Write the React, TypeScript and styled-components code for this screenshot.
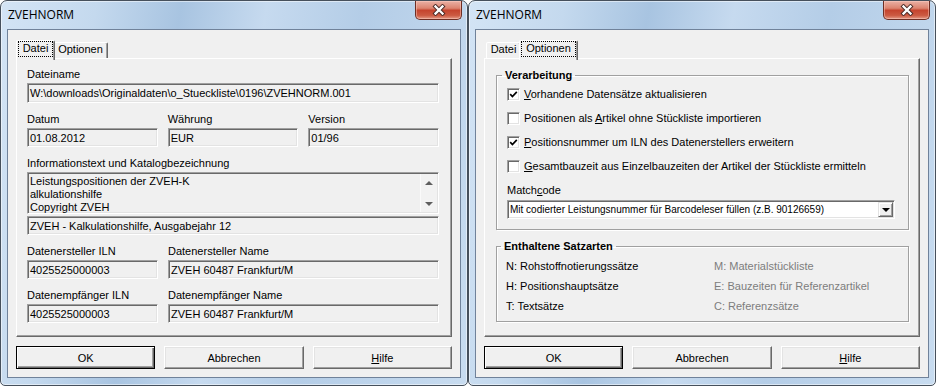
import React from 'react'
import styled, { createGlobalStyle, css } from 'styled-components'

const GlobalStyle = createGlobalStyle`
  *, *::before, *::after {
    box-sizing: border-box;
  }
  html, body {
    margin: 0;
    padding: 0;
    background: #ffffff;
  }
  body {
    font-family: 'Liberation Sans', Arial, sans-serif;
    font-size: 11px;
    color: #000;
  }
`

const sunken = css`
  border: 1px solid;
  border-color: #a0a0a0 #ffffff #ffffff #a0a0a0;
  box-shadow: inset 1px 1px 0 #696969, inset -1px -1px 0 #e3e3e3;
`

const raised = css`
  border: 1px solid;
  border-color: #e3e3e3 #696969 #696969 #e3e3e3;
  box-shadow: inset 1px 1px 0 #ffffff, inset -1px -1px 0 #a0a0a0;
  background: #f0f0f0;
`

const Desktop = styled.div`
  display: flex;
  width: 936px;
  height: 386px;
  overflow: hidden;
`

const WindowUI = styled.div`
  flex: 1;
  display: flex;
  flex-direction: column;
  padding: 0 6px 7px;
  border: 1px solid #46505c;
  border-radius: 7px 7px 5px 5px;
  background: linear-gradient(
    100deg,
    #d3e4f5 0%,
    #c4d9ee 18%,
    #a8c4e1 34%,
    #c6daef 50%,
    #b4cde7 68%,
    #c8dcf0 100%
  );
  box-shadow: inset 0 0 0 1px rgba(255, 255, 255, 0.5);
`

const TitleBar = styled.div`
  height: 28px;
  display: flex;
  justify-content: space-between;
  align-items: flex-start;
  padding-left: 1px;
`

const Title = styled.span`
  font-family: 'Open Sans', 'Noto Sans', sans-serif;
  font-size: 12px;
  line-height: 28px;
  color: #000;
`

const CloseButton = styled.div`
  width: 47px;
  height: 19px;
  margin-right: -1px;
  display: flex;
  align-items: center;
  justify-content: center;
  border: 1px solid #6e2e24;
  border-top: none;
  border-radius: 0 0 5px 5px;
  background: linear-gradient(
    #eab1a5 0%,
    #dc8470 40%,
    #c5442e 52%,
    #cc5a42 80%,
    #e49a86 100%
  );
  box-shadow: inset 0 0 0 1px rgba(255, 210, 200, 0.45);
`

const Client = styled.div`
  flex: 1;
  display: flex;
  flex-direction: column;
  padding: 10px 8px 8px;
  border: 1px solid #70829a;
  background: #f0f0f0;
`

const TabStrip = styled.div`
  position: relative;
  z-index: 1;
  height: 18px;
  display: flex;
  align-items: flex-end;
  padding-left: 2px;
`

const Tab = styled.div<{ $w: number; $active?: boolean }>`
  position: relative;
  z-index: ${p => (p.$active ? 2 : 1)};
  width: ${p => (p.$active ? p.$w + 4 : p.$w)}px;
  height: ${p => (p.$active ? 20 : 16)}px;
  margin: ${p => (p.$active ? '0 -2px -2px' : '0')};
  display: flex;
  justify-content: center;
  align-items: flex-start;
  padding: 0 1px;
  border: 1px solid;
  border-bottom: none;
  border-color: #ffffff #696969 transparent #ffffff;
  border-radius: 2px 2px 0 0;
  box-shadow: inset -1px 0 0 #a0a0a0;
  background: #f0f0f0;
  line-height: 13px;
`

const FocusRect = styled.span`
  display: block;
  width: 100%;
  height: 16px;
  border: 1px dotted #000;
  line-height: 12px;
  text-align: center;
`

const TabPanel = styled.div`
  flex: 1;
  border: 1px solid;
  border-color: #ffffff #696969 #696969 #ffffff;
  box-shadow: inset -1px -1px 0 #a0a0a0;
  background: #f0f0f0;
`

const ButtonRow = styled.div`
  margin-top: 9px;
  display: grid;
  grid-template-columns: repeat(3, 1fr);
  gap: 9px;
`

const PushButton = styled.button<{ $default?: boolean }>`
  height: 23px;
  padding: 0;
  font-family: 'Liberation Sans', Arial, sans-serif;
  font-size: 11px;
  color: #000;
  background: #f0f0f0;
  border: 1px solid;
  ${p =>
    p.$default
      ? css`
          border-color: #000;
          box-shadow: inset 1px 1px 0 #ffffff, inset -1px -1px 0 #696969, inset -2px -2px 0 #a0a0a0;
        `
      : css`
          border-color: #ffffff #696969 #696969 #ffffff;
          box-shadow: inset -1px -1px 0 #a0a0a0, inset 1px 1px 0 #e3e3e3;
        `}
`

/* Datei tab */

const DateiPane = styled.div`
  display: flex;
  flex-direction: column;
  gap: 10px;
  padding: 9px 12px 0 10px;
`

const Section = styled.div`
  display: flex;
  flex-direction: column;
  gap: 2px;
  min-width: 0;
`

const FieldLabel = styled.div`
  line-height: 13px;
  white-space: nowrap;
`

const Field = styled.div<{ $h: number }>`
  height: ${p => p.$h}px;
  display: flex;
  align-items: center;
  padding: 0 2px;
  ${sunken};
  white-space: nowrap;
  overflow: hidden;
`

const Columns = styled.div<{ $cols: string }>`
  display: grid;
  grid-template-columns: ${p => p.$cols};
  gap: 10px;
`

const Memo = styled.div`
  height: 42px;
  display: flex;
  ${sunken};
`

const MemoText = styled.div`
  flex: 1;
  padding: 2px 2px 0;
  line-height: 13px;
  white-space: pre;
  overflow: hidden;
`

const MemoScroll = styled.div`
  width: 17px;
  margin: 1px 1px 1px 0;
  display: flex;
  flex-direction: column;
  justify-content: space-between;
  border-left: 1px solid #fafafa;
  background: #f2f2f2;
`

const ScrollArrow = styled.div<{ $dir: 'up' | 'down' }>`
  height: 17px;
  display: flex;
  align-items: center;
  justify-content: center;
  &::after {
    content: '';
    border-left: 4px solid transparent;
    border-right: 4px solid transparent;
    ${p => (p.$dir === 'up' ? 'border-bottom: 4px solid #5e5e5e;' : 'border-top: 4px solid #5e5e5e;')}
  }
`

/* Optionen tab */

const OptionsPane = styled.div`
  display: flex;
  flex-direction: column;
  gap: 10px;
  padding: 10px 10px 0 11px;
`

const GroupBox = styled.fieldset<{ $pad: string }>`
  margin: 0;
  min-width: 0;
  padding: ${p => p.$pad};
  border: 1px solid #a0a0a0;
  box-shadow: inset 1px 1px 0 #ffffff, 1px 1px 0 #ffffff;
`

const GroupTitle = styled.legend`
  margin-left: -5px;
  padding: 0 3px;
  font-weight: bold;
  line-height: 13px;
`

const CheckRow = styled.label`
  height: 24px;
  display: flex;
  align-items: center;
  gap: 4px;
  white-space: nowrap;
`

const CheckBox = styled.span`
  width: 13px;
  height: 13px;
  flex: none;
  display: flex;
  align-items: center;
  justify-content: center;
  background: #ffffff;
  ${sunken};
`

const ComboLabel = styled.div`
  margin-top: 6px;
  line-height: 13px;
`

const Combo = styled.div`
  margin-top: 3px;
  height: 19px;
  display: flex;
  align-items: center;
  padding: 0 1px 0 2px;
  background: #ffffff;
  ${sunken};
`

const ComboText = styled.span`
  flex: 1;
  font-size: 10px;
  white-space: nowrap;
  overflow: hidden;
`

const ComboButton = styled.span`
  width: 15px;
  height: 15px;
  display: flex;
  align-items: center;
  justify-content: center;
  ${raised};
  &::after {
    content: '';
    border-left: 4px solid transparent;
    border-right: 4px solid transparent;
    border-top: 4px solid #000;
  }
`

const RecordGrid = styled.div`
  margin-top: 3px;
  display: grid;
  grid-template-columns: 208px 1fr;
  grid-auto-rows: 20px;
  align-items: center;
`

const RecordType = styled.span<{ $muted?: boolean }>`
  color: ${p => (p.$muted ? '#7d7d7d' : '#000')};
  white-space: nowrap;
`

const CheckMark = () => (
  <svg width="9" height="9" viewBox="0 0 9 9">
    <polyline points="1.2,4.2 3.4,6.5 7.8,1.8" fill="none" stroke="#000" strokeWidth="1.7" />
  </svg>
)

const CloseGlyph = () => (
  <svg width="14" height="12" viewBox="0 0 14 12">
    <g strokeLinecap="square">
      <path d="M3.5 2.5 L10.5 9.5 M10.5 2.5 L3.5 9.5" stroke="#4a2a26" strokeWidth="4.2" />
      <path d="M3.5 2.5 L10.5 9.5 M10.5 2.5 L3.5 9.5" stroke="#ffffff" strokeWidth="2.3" />
    </g>
  </svg>
)

type DialogProps = {
  active: 'datei' | 'optionen'
  children: React.ReactNode
}

const Dialog = ({ active, children }: DialogProps) => (
  <WindowUI>
    <TitleBar>
      <Title>ZVEHNORM</Title>
      <CloseButton>
        <CloseGlyph />
      </CloseButton>
    </TitleBar>
    <Client>
      <TabStrip>
        <Tab $w={35} $active={active === 'datei'}>
          {active === 'datei' ? <FocusRect>Datei</FocusRect> : 'Datei'}
        </Tab>
        <Tab $w={55} $active={active === 'optionen'}>
          {active === 'optionen' ? <FocusRect>Optionen</FocusRect> : 'Optionen'}
        </Tab>
      </TabStrip>
      <TabPanel>{children}</TabPanel>
      <ButtonRow>
        <PushButton $default>OK</PushButton>
        <PushButton>Abbrechen</PushButton>
        <PushButton>
          <u>H</u>ilfe
        </PushButton>
      </ButtonRow>
    </Client>
  </WindowUI>
)

const DateiTab = () => (
  <DateiPane>
    <Section>
      <FieldLabel>Dateiname</FieldLabel>
      <Field $h={20}>W:\downloads\Originaldaten\o_Stueckliste\0196\ZVEHNORM.001</Field>
    </Section>
    <Columns $cols="repeat(3, 1fr)">
      <Section>
        <FieldLabel>Datum</FieldLabel>
        <Field $h={19}>01.08.2012</Field>
      </Section>
      <Section>
        <FieldLabel>Währung</FieldLabel>
        <Field $h={19}>EUR</Field>
      </Section>
      <Section>
        <FieldLabel>Version</FieldLabel>
        <Field $h={19}>01/96</Field>
      </Section>
    </Columns>
    <Section>
      <FieldLabel>Informationstext und Katalogbezeichnung</FieldLabel>
      <Memo>
        <MemoText>{'Leistungspositionen der ZVEH-K\nalkulationshilfe\nCopyright ZVEH'}</MemoText>
        <MemoScroll>
          <ScrollArrow $dir="up" />
          <ScrollArrow $dir="down" />
        </MemoScroll>
      </Memo>
      <Field $h={19}>ZVEH - Kalkulationshilfe, Ausgabejahr 12</Field>
    </Section>
    <Columns $cols="131px 1fr">
      <Section>
        <FieldLabel>Datenersteller ILN</FieldLabel>
        <Field $h={19}>4025525000003</Field>
      </Section>
      <Section>
        <FieldLabel>Datenersteller Name</FieldLabel>
        <Field $h={19}>ZVEH 60487 Frankfurt/M</Field>
      </Section>
    </Columns>
    <Columns $cols="131px 1fr">
      <Section>
        <FieldLabel>Datenempfänger ILN</FieldLabel>
        <Field $h={19}>4025525000003</Field>
      </Section>
      <Section>
        <FieldLabel>Datenempfänger Name</FieldLabel>
        <Field $h={19}>{'ZVEH  60487 Frankfurt/M'}</Field>
      </Section>
    </Columns>
  </DateiPane>
)

const options = [
  { checked: true, key: 'V', rest: 'orhandene Datensätze aktualisieren', pre: '' },
  { checked: false, key: 'A', rest: 'rtikel ohne Stückliste importieren', pre: 'Positionen als ' },
  { checked: true, key: 'P', rest: 'ositionsnummer um ILN des Datenerstellers erweitern', pre: '' },
  { checked: false, key: 'G', rest: 'esamtbauzeit aus Einzelbauzeiten der Artikel der Stückliste ermitteln', pre: '' },
]

const records = [
  ['N: Rohstoffnotierungssätze', 'M: Materialstückliste'],
  ['H: Positionshauptsätze', 'E: Bauzeiten für Referenzartikel'],
  ['T: Textsätze', 'C: Referenzsätze'],
]

const OptionenTab = () => (
  <OptionsPane>
    <GroupBox $pad="0 13px 10px 10px">
      <GroupTitle>Verarbeitung</GroupTitle>
      {options.map(o => (
        <CheckRow key={o.key}>
          <CheckBox>{o.checked && <CheckMark />}</CheckBox>
          <span>
            {o.pre}
            <u>{o.key}</u>
            {o.rest}
          </span>
        </CheckRow>
      ))}
      <ComboLabel>
        Match<u>c</u>ode
      </ComboLabel>
      <Combo>
        <ComboText>Mit codierter Leistungsnummer für Barcodeleser füllen (z.B. 90126659)</ComboText>
        <ComboButton />
      </Combo>
    </GroupBox>
    <GroupBox $pad="0 13px 5px 9px">
      <GroupTitle>Enthaltene Satzarten</GroupTitle>
      <RecordGrid>
        {records.map(([left, right]) => (
          <React.Fragment key={left}>
            <RecordType>{left}</RecordType>
            <RecordType $muted>{right}</RecordType>
          </React.Fragment>
        ))}
      </RecordGrid>
    </GroupBox>
  </OptionsPane>
)

export default function App() {
  return (
    <>
      <GlobalStyle />
      <Desktop>
        <Dialog active="datei">
          <DateiTab />
        </Dialog>
        <Dialog active="optionen">
          <OptionenTab />
        </Dialog>
      </Desktop>
    </>
  )
}
